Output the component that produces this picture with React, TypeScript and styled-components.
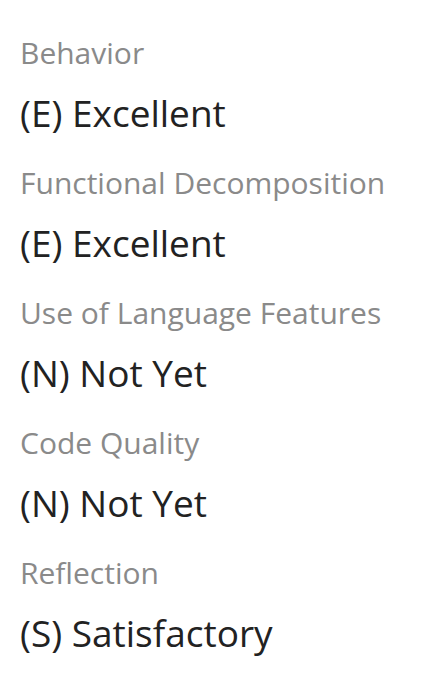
import React from "react";
import styled, { createGlobalStyle } from "styled-components";

const Global = createGlobalStyle`
  html, body { margin: 0; padding: 0; background: #ffffff; }
  body { font-family: "Open Sans", "Noto Sans", sans-serif; }
`;

const List = styled.div`
  display: flex;
  flex-direction: column;
  gap: 24px;
  padding: 32px 20px 0 20px;
`;

const Item = styled.div`
  display: flex;
  flex-direction: column;
  gap: 15px;
`;

const Label = styled.div`
  font-size: 30px;
  line-height: 41px;
  color: #8a8a8a;
`;

const Value = styled.div`
  font-size: 37px;
  line-height: 50px;
  color: #222222;
`;

const rows = [
  ["Behavior", "(E) Excellent"],
  ["Functional Decomposition", "(E) Excellent"],
  ["Use of Language Features", "(N) Not Yet"],
  ["Code Quality", "(N) Not Yet"],
  ["Reflection", "(S) Satisfactory"],
];

export default function App() {
  return (
    <>
      <Global />
      <List>
        {rows.map(([l, v]) => (
          <Item key={l}>
            <Label>{l}</Label>
            <Value>{v}</Value>
          </Item>
        ))}
      </List>
    </>
  );
}
